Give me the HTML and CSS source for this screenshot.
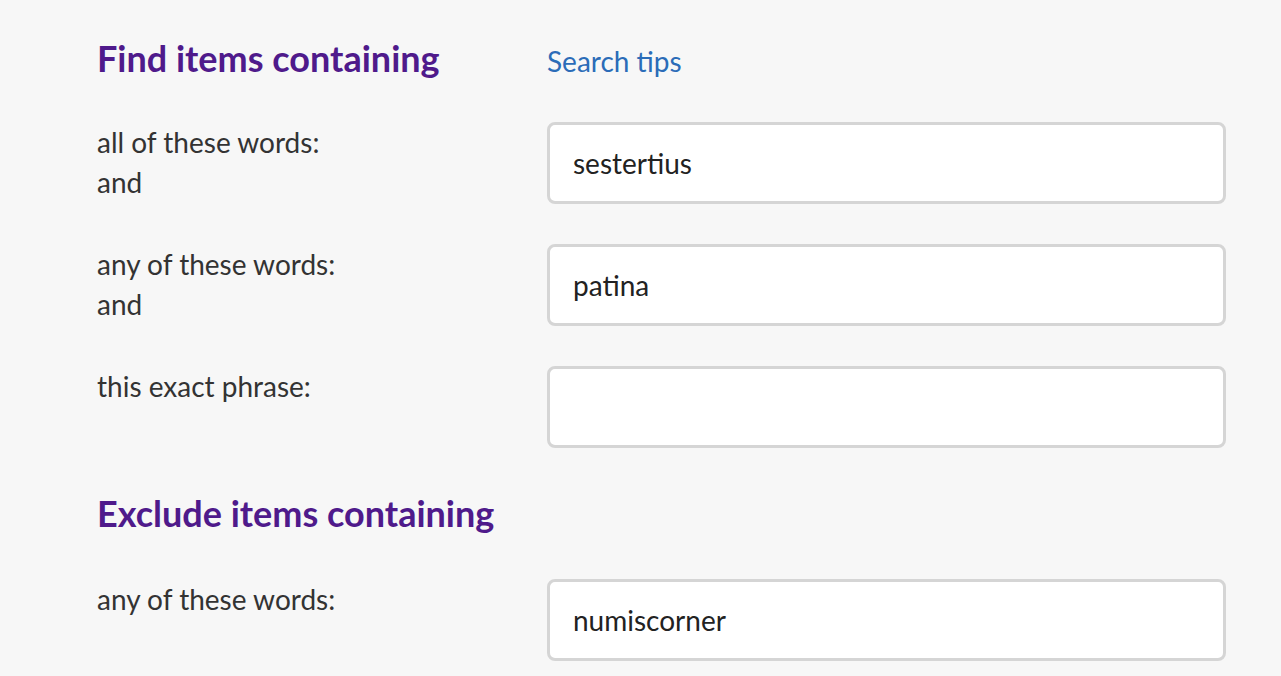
FILE: index.html
```html
<!DOCTYPE html>
<html lang="en">
<head>
<meta charset="utf-8">
<title>Advanced search</title>
<link rel="stylesheet" href="styles.css">
</head>
<body>
<main class="page">
  <div class="head-row">
    <h2 class="heading">Find items containing</h2>
    <a class="tips" href="#">Search tips</a>
  </div>
  <div class="row">
    <label class="label">all of these words:<br>and</label>
    <div class="field">sestertius</div>
  </div>
  <div class="row">
    <label class="label">any of these words:<br>and</label>
    <div class="field">patina</div>
  </div>
  <div class="row">
    <label class="label">this exact phrase:</label>
    <div class="field"></div>
  </div>
  <h2 class="heading heading-2">Exclude items containing</h2>
  <div class="row">
    <label class="label">any of these words:</label>
    <div class="field">numiscorner</div>
  </div>
</main>
</body>
</html>
```
FILE: styles.css
```css
html, body {
  margin: 0;
  padding: 0;
  background: #f7f7f7;
  font-family: Lato, "Open Sans", sans-serif;
}
.page {
  padding: 38px 0 0 97px;
}
.head-row {
  display: grid;
  grid-template-columns: 450px 679px;
  align-items: baseline;
  margin-bottom: 41px;
}
.heading {
  margin: 0;
  font-size: 36px;
  line-height: 40px;
  font-weight: 700;
  color: #4f1a8b;
}
.tips {
  color: #2b6cb8;
  font-size: 28px;
  line-height: 40px;
  text-decoration: none;
}
.row {
  display: grid;
  grid-template-columns: 450px 679px;
  align-items: start;
  margin-bottom: 40px;
}
.label {
  font-size: 28px;
  line-height: 40px;
  color: #333333;
}
.field {
  box-sizing: border-box;
  height: 82px;
  border: 3px solid #d5d5d5;
  border-radius: 8px;
  background: #ffffff;
  padding: 0 23px;
  font-size: 28px;
  line-height: 76px;
  color: #222222;
}
.heading-2 {
  margin: 45px 0 46px;
}
```
